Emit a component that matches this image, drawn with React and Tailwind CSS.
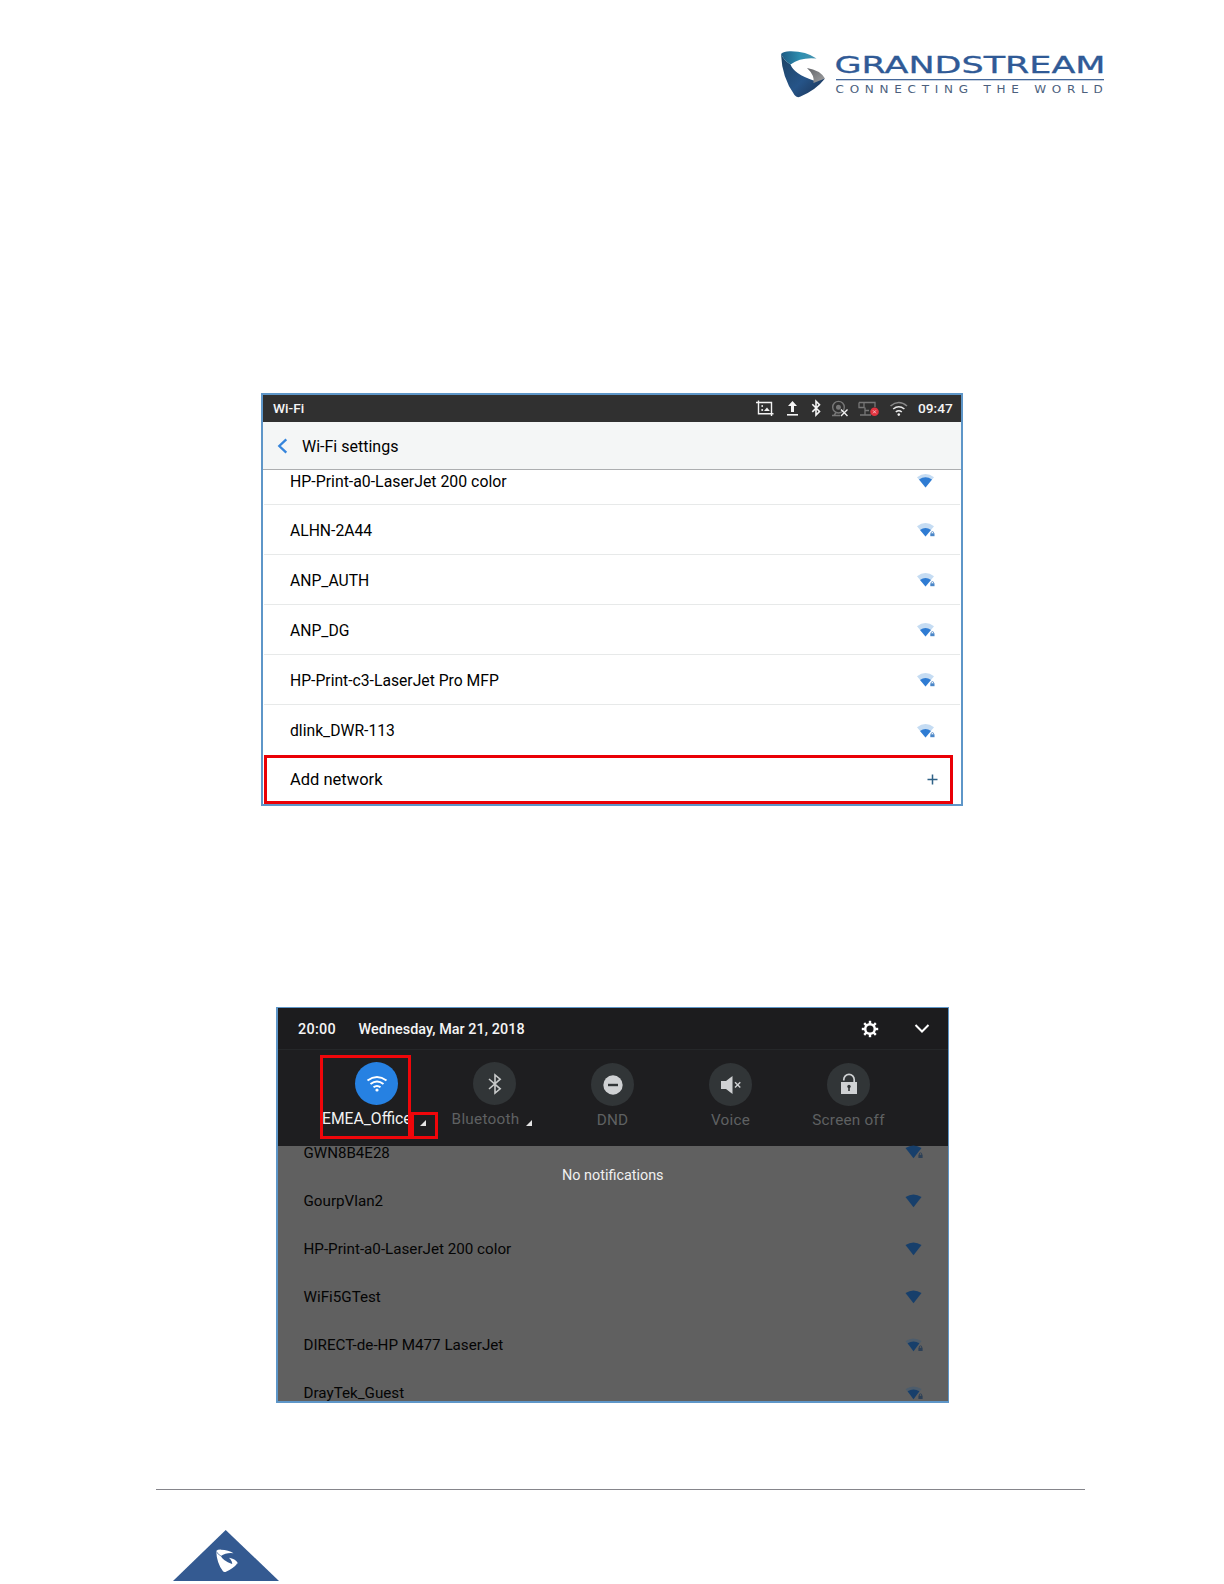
import React from "react";

const networks = [
  ["HP-Print-a0-LaserJet 200 color", false],
  ["ALHN-2A44", true],
  ["ANP_AUTH", true],
  ["ANP_DG", true],
  ["HP-Print-c3-LaserJet Pro MFP", true],
  ["dlink_DWR-113", true],
];

const dimmed = [
  ["GWN8B4E28", "full", true],
  ["GourpVlan2", "full", false],
  ["HP-Print-a0-LaserJet 200 color", "full", false],
  ["WiFi5GTest", "full", false],
  ["DIRECT-de-HP M477 LaserJet", "weak", true],
  ["DrayTek_Guest", "weak", true],
];

function Signal({ locked }) {
  return (
    <svg width="20" height="14" viewBox="0 0 20 14" className="block">
      <path d="M0 3.200 Q8.500 -3 17 3.200 L8.500 13.600 Z" fill="#c5dcf3" />
      {locked ? (
        <path d="M3 7 Q8.500 3 14 7 L8.500 13.600 Z" fill="#2f7cd3" />
      ) : (
        <path d="M2 5.400 Q8.500 1.200 15 5.400 L8.500 13.600 Z" fill="#2f7cd3" />
      )}
      {locked && (
        <>
          <path d="M14.500 7.500 H19 V14 H11 Z" fill="#ffffff" />
          <path d="M14.200 10.500 V9.800 a1.200 1.200 0 0 1 2.400 0 V10.500" fill="none" stroke="#5b8fca" strokeWidth="0.900" />
          <rect x="13.300" y="10.300" width="4.200" height="2.900" fill="#4a86c8" />
        </>
      )}
    </svg>
  );
}

function DimSignal({ level, locked }) {
  return (
    <svg width="20" height="14" viewBox="0 0 20 14" className="block">
      <path d="M0.500 3 Q8.500 -2.200 16.500 3 L8.500 13.300 Z" fill={level === "full" ? "#173f6b" : "#4d5c6b"} />
      {level === "weak" && <path d="M2.600 5.200 Q8.500 1.600 14.400 5.200 L8.500 13.300 Z" fill="#173f6b" />}
      {locked && (
        <>
          <path d="M14.500 6.500 H19 V14 H10.500 Z" fill="#606060" />
          <path d="M14.300 10 V9 a1.200 1.200 0 0 1 2.400 0 V10" fill="none" stroke="#2c4057" strokeWidth="0.900" />
          <rect x="13.400" y="9.800" width="4.200" height="3.200" fill="#2c4057" />
        </>
      )}
    </svg>
  );
}

function StatusIcons() {
  return (
    <svg width="154" height="27" viewBox="0 0 154 27" className="block" fill="none">
      <g stroke="#f2f2f2" strokeWidth="1.400">
        <path d="M0 7.500 H15.500 V21 M2.500 5.500 V18.800 H17.500" />
      </g>
      <path d="M8 16 L11 12.500 L13.800 16 Z" fill="#f2f2f2" />
      <circle cx="6.200" cy="11" r="0.900" fill="#f2f2f2" />
      <circle cx="6.200" cy="15" r="1" fill="#f2f2f2" />
      <path d="M36.500 6 L41 11 H38 V17 H35 V11 H32 Z" fill="#f5f5f5" />
      <rect x="31" y="19" width="11" height="1.600" fill="#f5f5f5" />
      <path d="M56.300 9.300 L63.500 16.500 L60 20 V6.200 L63.500 9.700 L56.300 16.900" stroke="#f5f5f5" strokeWidth="1.600" />
      <g stroke="#777777" strokeWidth="1.400">
        <circle cx="82.500" cy="12.200" r="5.800" />
        <circle cx="82.500" cy="12.200" r="1.800" fill="#777777" />
        <path d="M76 20.500 H84 M80 17.500 L78 20.500" />
      </g>
      <path d="M85 14.500 L91.500 21 M91.500 14.500 L85 21" stroke="#f0f0f0" strokeWidth="1.400" />
      <g stroke="#777777" strokeWidth="1.300">
        <path d="M103 7.500 H119 V12 M103 7.500 V12.500 H108 V7.500 M109 12.500 V20 M104 20 H115 M109 15.500 H113" />
      </g>
      <circle cx="118.500" cy="16.800" r="4.300" fill="#e23440" />
      <path d="M117 15.300 L120 18.300 M120 15.300 L117 18.300" stroke="#f6c4c8" strokeWidth="0.900" />
      <path d="M134.500 11 Q142.800 4 151 11" stroke="#888888" strokeWidth="1.600" />
      <path d="M137.200 14 Q142.800 9.500 148.400 14" stroke="#e8e8e8" strokeWidth="1.600" />
      <path d="M139.800 17 Q142.800 14.500 145.800 17" stroke="#f0f0f0" strokeWidth="1.600" />
      <circle cx="142.800" cy="19.600" r="1.300" fill="#f0f0f0" />
    </svg>
  );
}

const SHIELD_TOP = "M781 54 Q784 51 791 51.300 Q806 51.300 816.500 58.500 Q801 56.800 790.500 64.500 Q784 60.500 781 54 Z";
const SHIELD_BODY = "M781 54 Q784 60.500 790.500 64.500 Q794 74 813.500 80.500 L825 78.500 Q816 90 800 96.800 Q796.500 98 794.500 95 Q782 78 781 54 Z";
const SHIELD_TIP = "M807 68 Q820 70 825 78.500 L813.500 83 Q815 75.500 807 68 Z";

function Logo() {
  return (
    <svg width="340" height="60" viewBox="775 45 340 60" className="block">
      <defs>
        <linearGradient id="teal" x1="0" y1="0" x2="1" y2="0">
          <stop offset="0" stopColor="#1d5a84" />
          <stop offset="0.550" stopColor="#2f8fb0" />
          <stop offset="1" stopColor="#4693b0" />
        </linearGradient>
        <linearGradient id="navy" x1="0" y1="0" x2="1" y2="1">
          <stop offset="0" stopColor="#1c4263" />
          <stop offset="0.550" stopColor="#265488" />
          <stop offset="1" stopColor="#1a3050" />
        </linearGradient>
        <linearGradient id="steel" x1="0" y1="0" x2="1" y2="1">
          <stop offset="0" stopColor="#626468" />
          <stop offset="1" stopColor="#a0a1a3" />
        </linearGradient>
      </defs>
      <path d={SHIELD_BODY} fill="url(#navy)" />
      <path d={SHIELD_TOP} fill="url(#teal)" />
      <path d={SHIELD_TIP} fill="url(#steel)" />
      <text x="834.500" y="73" fontFamily="DejaVu Sans" fontSize="23.800" fill="#305a96" stroke="#305a96" strokeWidth="0.300" textLength="271" lengthAdjust="spacingAndGlyphs">GRANDSTREAM</text>
      <rect x="836" y="79" width="268" height="1.300" fill="#44679a" />
      <text x="835.500" y="93" fontFamily="DejaVu Sans" fontSize="9.600" letterSpacing="4.600" fill="#4c5f7d" textLength="273" lengthAdjust="spacingAndGlyphs">CONNECTING THE WORLD</text>
    </svg>
  );
}

function Tile({ label, children, active, arrow, low }) {
  return (
    <div className={low ? "flex w-[118px] flex-col items-center pt-[13px]" : "flex w-[118px] flex-col items-center pt-[12px]"}>
      <div className={active ? "flex h-[43px] w-[43px] items-center justify-center rounded-full bg-[#2681e2]" : "flex h-[43px] w-[43px] items-center justify-center rounded-full bg-[#313537]"}>
        {children}
      </div>
      <div className={active ? "relative mt-[4px] flex h-5 w-[109px] items-center text-[15.700px] text-[#f2f2f2]" : "relative mt-[4px] flex h-5 items-center text-[15.300px] tracking-[0.250px] text-[#5f6162]"}>
        <span className={active ? "block w-[87px] overflow-hidden whitespace-nowrap" : arrow ? "mr-[18px] whitespace-nowrap" : "whitespace-nowrap"}>{label}</span>
        {arrow && (
          <svg width="6" height="6" className={active ? "absolute left-[98px] top-[11px]" : "absolute right-[5px] top-[11px]"}>
            <path d="M6 0 V6 H0 Z" fill="#e4e4e4" />
          </svg>
        )}
      </div>
    </div>
  );
}

function WifiPanel() {
  return (
    <section className="relative ml-[261px] h-[413px] w-[702px] overflow-hidden border-2 border-[#5e96c8] bg-white">
      <header className="flex h-[27px] items-center justify-between bg-[#303030] pl-[10px] pr-[9px] text-[13.700px] font-medium text-[#f5f5f5]">
        <span>Wi-Fi</span>
        <div className="flex items-center gap-[8px]">
          <StatusIcons />
          <span className="w-[34px] whitespace-nowrap">09:47</span>
        </div>
      </header>
      <div className="flex h-[48px] items-center border-b border-[#acaeb0] bg-[#f4f6f6] pl-[14px] text-[16px]">
        <svg width="11" height="16" viewBox="0 0 11 16" className="mr-[14px]">
          <path d="M9.300 1.300 L2.300 8 L9.300 14.700" fill="none" stroke="#3585dc" strokeWidth="2.300" />
        </svg>
        <span className="pt-[2px] text-black">Wi-Fi settings</span>
      </div>
      <div>
        {networks.map(([name, locked], i) => (
          <div key={name} className={i === 0 ? "mx-px flex h-[35px] items-start justify-between border-b border-[#e7e9e9] pl-[26px] pr-[23px]" : i === 5 ? "mx-px flex h-[50px] items-center justify-between pl-[26px] pr-[23px]" : "mx-px flex h-[50px] items-center justify-between border-b border-[#e7e9e9] pl-[26px] pr-[23px]"}>
            <span className={i === 0 ? "text-[15.850px] leading-[23px] text-black" : "pt-[2px] text-[15.700px] leading-6 text-black"}>{name}</span>
            <div className={i === 0 ? "mt-[4px]" : "pt-px"}><Signal locked={locked} /></div>
          </div>
        ))}
      </div>
      <div className="mt-[0px] ml-px flex h-[49px] w-[689px] items-center justify-between border-[3px] border-[#ea0006] pl-[23px] pr-[12px]">
        <span className="pt-[2px] text-[16.500px] text-black">Add network</span>
        <svg width="11" height="11"><path d="M5.500 0.500 V10.500 M0.500 5.500 H10.500" stroke="#2f6186" strokeWidth="1.500" /></svg>
      </div>
    </section>
  );
}

function NotificationPanel() {
  const teeth = [0, 45, 90, 135, 180, 225, 270, 315];
  return (
    <section className="relative ml-[276px] h-[396px] w-[673px] overflow-hidden border-b-2 border-l-2 border-r border-t border-[#5e96c8] bg-[#606060]">
      <header className="flex h-[42px] items-center border-b border-[#252729] bg-[#1c1c1e] pl-[20px] text-[14.400px] font-medium text-[#f5f5f5]">
        <span className="w-[60.500px] pt-[2px] tracking-[0.300px]">20:00</span>
        <span className="flex-1 pt-[2px] tracking-[0.050px]">Wednesday, Mar 21, 2018</span>
        <svg width="18" height="18" viewBox="-9 -9 18 18" className="mr-[35.500px]">
          {teeth.map((a) => (
            <rect key={a} x="-1.200" y="-8.200" width="2.400" height="4" fill="#fff" transform={`rotate(${a})`} />
          ))}
          <circle r="4.800" fill="none" stroke="#fff" strokeWidth="2.500" />
        </svg>
        <svg width="16" height="12" className="mr-[18px]"><path d="M1.500 2 L8 8.500 L14.500 2" fill="none" stroke="#fff" strokeWidth="2" /></svg>
      </header>
      <div className="flex h-[96px] bg-[#1e1e20] pl-[39.500px]">
        <Tile label="EMEA_Office" active arrow>
          <svg width="22" height="18" viewBox="0 0 22 18" fill="none" stroke="#fff" strokeWidth="2">
            <path d="M1.500 5.500 Q11 -1.500 20.500 5.500 M4.500 9 Q11 4 17.500 9 M7.500 12.300 Q11 9.600 14.500 12.300" />
            <circle cx="11" cy="15" r="1.600" fill="#fff" stroke="none" />
          </svg>
        </Tile>
        <Tile label="Bluetooth" arrow>
          <svg width="14" height="22" viewBox="0 0 14 22" fill="none" stroke="#c8caca" strokeWidth="1.600">
            <path d="M1 6 L12.200 15.800 L7 20 V2 L12.200 6.200 L1 16" />
          </svg>
        </Tile>
        <Tile label="DND" low>
          <svg width="20" height="20"><circle cx="10" cy="10" r="9.700" fill="#cfd1d3" /><rect x="5" y="8.800" width="10" height="2.400" fill="#313537" /></svg>
        </Tile>
        <Tile label="Voice" low>
          <svg width="20" height="18" viewBox="0 0 20 18">
            <path d="M0 5 H5 L11.500 0 V18 L5 13 H0 Z" fill="#cfd1d3" />
            <path d="M14 6.300 L19.300 11.600 M19.300 6.300 L14 11.600" stroke="#cfd1d3" strokeWidth="1.400" />
          </svg>
        </Tile>
        <Tile label="Screen off" low>
          <svg width="18" height="22" viewBox="0 0 18 22" className="-mt-[2px]">
            <path d="M3.800 7.500 V6.500 A5.200 5.200 0 0 1 14.200 6.500 V9" fill="none" stroke="#cfd1d3" strokeWidth="1.700" />
            <rect x="1" y="9" width="16" height="12" fill="#cfd1d3" />
            <circle cx="9" cy="13.500" r="1.700" fill="#313537" /><rect x="8.200" y="14" width="1.600" height="4" fill="#313537" />
          </svg>
        </Tile>
      </div>
      <div>
        {dimmed.map(([name, level, locked], i) => (
          <div key={name} className={i === 0 ? "flex h-[31px] items-start justify-between pl-[25.500px] pr-[23px]" : "flex h-[48px] items-center justify-between pl-[25.500px] pr-[23px]"}>
            <span className={i === 0 ? "-mt-[3px] text-[15.100px] leading-5 text-[#050505]" : "text-[15.200px] leading-5 text-[#050505]"}>{name}</span>
            <div className="-mt-px"><DimSignal level={level} locked={locked} /></div>
          </div>
        ))}
      </div>
      <span className="absolute left-[284px] top-[158px] whitespace-nowrap text-[14.400px] leading-5 text-[#f0f0f0]">No notifications</span>
      <div className="absolute left-[42px] top-[47px] h-[84px] w-[91px] border-[3px] border-[#f0060a]" />
      <div className="absolute left-[133px] top-[104px] h-[27px] w-[27px] border-[3px] border-[#f0060a]" />
    </section>
  );
}

export default function App() {
  return (
    <main className="h-[1584px] w-[1224px] overflow-hidden bg-white font-['Roboto',sans-serif]">
      <div className="h-[393px] pl-[775px] pt-[45px]"><Logo /></div>
      <WifiPanel />
      <div className="h-[201px]" />
      <NotificationPanel />
      <footer className="ml-[156px] mt-[86px] w-[929px] border-t border-[#85858b]">
        <svg width="106" height="52" viewBox="173 1530 106 52" className="ml-[17px] mt-[40px] block">
          <path d="M225.700 1530 L279 1581 H173 Z" fill="#345a91" />
          <g transform="translate(-166.500 1524.500) scale(0.490)" fill="#fff">
            <path d={SHIELD_BODY} />
            <path d={SHIELD_TOP} />
            <path d={SHIELD_TIP} />
            <path d="M781 55 Q784 60.500 791 64.500" stroke="#345a91" strokeWidth="1.200" fill="none" />
          </g>
        </svg>
      </footer>
    </main>
  );
}
